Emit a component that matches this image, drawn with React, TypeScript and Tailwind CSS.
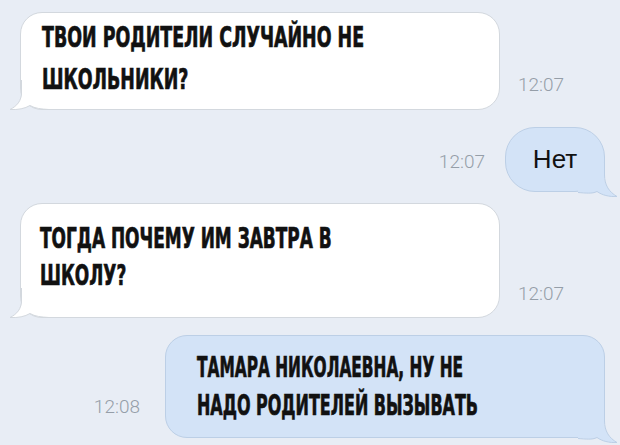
import React from 'react';

const impact = "font-['DejaVu_Sans',sans-serif] font-bold font-stretch-condensed text-[29px] text-[#111] [-webkit-text-stroke:0.7px_#111]";
const stamp = "font-['Roboto',sans-serif] font-light text-[19px] leading-none text-[#959ea8]";

const LeftTail = () => (
  <svg className="absolute -left-[12px] -bottom-[1px]" width="40" height="30" viewBox="0 0 40 30">
    <path d="M13 0 L13 12 C13 21 8 26 1 29.5 C9 30 16 28.5 21 25.5 C26 28.5 32 29 40 29 L40 0 Z" fill="#ffffff" />
    <path d="M12.5 0 L12.5 12 C12.5 21 8 26 1 29.5 C9 30 16 28.5 21 25.5 C26 28.5 32 29 40 29.5" fill="none" stroke="#d3d8de" strokeWidth="1" />
  </svg>
);

const RightTail = () => (
  <svg className="absolute -right-[14px] -bottom-[6px]" width="40" height="34" viewBox="0 0 40 34">
    <path d="M26 0 L26 12 C26 22 31 29 39 33.5 C31 34 24 32 19 28.5 C14 31 8 30 0 29 L0 0 Z" fill="#d3e3f7" />
    <path d="M26.5 0 L26.5 12 C26.5 22 31 29 39 33.5 C31 34 24 32 19 28.5 C14 31 8 30 0 29.5" fill="none" stroke="#bccfe6" strokeWidth="1" />
  </svg>
);

const Line = ({ text, scale }: { text: string; scale: string }) => (
  <div className="relative z-10 whitespace-nowrap">
    <span className={`inline-block origin-left ${scale}`}>{text}</span>
  </div>
);

export default function App() {
  return (
    <div className="w-[620px] h-[445px] overflow-hidden bg-[#e8edf5] flex flex-col">
      {/* incoming 1 */}
      <div className="flex items-end pl-[20px] pt-[12px]">
        <div className={`relative w-[480px] h-[98px] bg-white border border-[#d3d8de] rounded-[22px] pl-[21px] pt-[3px] leading-[42px] ${impact}`}>
          <Line text="ТВОИ РОДИТЕЛИ СЛУЧАЙНО НЕ" scale="scale-x-[0.668]" />
          <Line text="ШКОЛЬНИКИ?" scale="scale-x-[0.668]" />
          <LeftTail />
        </div>
        <span className={`ml-[18px] mb-[16px] ${stamp}`}>12:07</span>
      </div>

      {/* outgoing short */}
      <div className="flex items-center justify-end pr-[15px] mt-[17px]">
        <span className={`mr-[20px] mt-[4px] ${stamp}`}>12:07</span>
        <div className="relative w-[100px] h-[65px] bg-[#d3e3f7] border border-[#bccfe6] rounded-[30px] flex items-center justify-center font-['Liberation_Sans',sans-serif] text-[26px] text-[#111]">
          <span className="relative z-10">Нет</span>
          <RightTail />
        </div>
      </div>

      {/* incoming 2 */}
      <div className="flex items-end pl-[20px] mt-[11px]">
        <div className={`relative w-[480px] h-[115px] bg-white border border-[#d3d8de] rounded-[22px] pl-[19px] pt-[16px] leading-[37px] ${impact}`}>
          <Line text="ТОГДА ПОЧЕМУ ИМ ЗАВТРА В" scale="scale-x-[0.65]" />
          <Line text="ШКОЛУ?" scale="scale-x-[0.65]" />
          <LeftTail />
        </div>
        <span className={`ml-[18px] mb-[15px] ${stamp}`}>12:07</span>
      </div>

      {/* outgoing long */}
      <div className="flex items-end justify-end pr-[15px] mt-[17px]">
        <span className={`mr-[25px] mb-[22px] ${stamp}`}>12:08</span>
        <div className={`relative w-[440px] h-[103px] bg-[#d3e3f7] border border-[#bccfe6] rounded-[22px] pl-[31px] pt-[12px] leading-[38px] ${impact}`}>
          <Line text="ТАМАРА НИКОЛАЕВНА, НУ НЕ" scale="scale-x-[0.59]" />
          <Line text="НАДО РОДИТЕЛЕЙ ВЫЗЫВАТЬ" scale="scale-x-[0.612]" />
          <RightTail />
        </div>
      </div>
    </div>
  );
}
